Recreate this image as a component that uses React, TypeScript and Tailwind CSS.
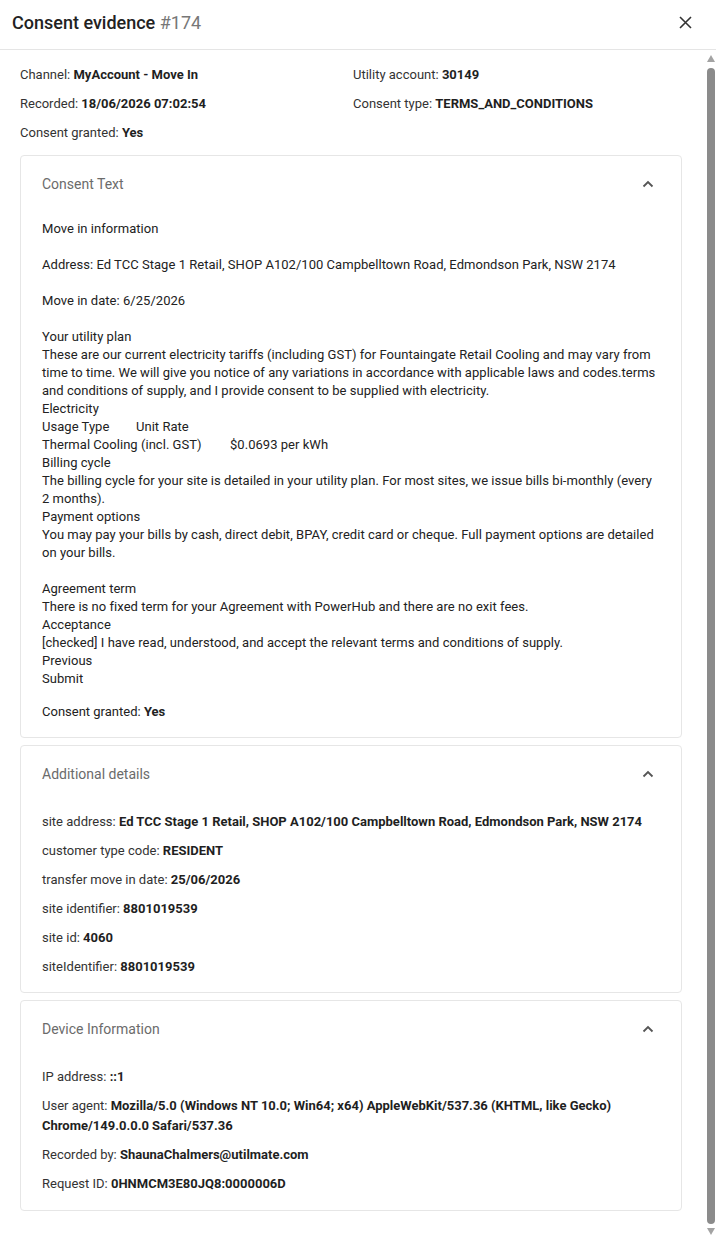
import type { ReactNode } from "react"

const consentText = `Move in information

Address: Ed TCC Stage 1 Retail, SHOP A102/100 Campbelltown Road, Edmondson Park, NSW 2174

Move in date: 6/25/2026

Your utility plan
These are our current electricity tariffs (including GST) for Fountaingate Retail Cooling and may vary from time to time. We will give you notice of any variations in accordance with applicable laws and codes.terms and conditions of supply, and I provide consent to be supplied with electricity.
Electricity
Usage Type\tUnit Rate
Thermal Cooling (incl. GST)\t$0.0693 per kWh
Billing cycle
The billing cycle for your site is detailed in your utility plan. For most sites, we issue bills bi-monthly (every 2 months).
Payment options
You may pay your bills by cash, direct debit, BPAY, credit card or cheque. Full payment options are detailed on your bills.

Agreement term
There is no fixed term for your Agreement with PowerHub and there are no exit fees.
Acceptance
[checked] I have read, understood, and accept the relevant terms and conditions of supply.
Previous
Submit`

const additionalDetails = [
  { label: "site address", value: "Ed TCC Stage 1 Retail, SHOP A102/100 Campbelltown Road, Edmondson Park, NSW 2174" },
  { label: "customer type code", value: "RESIDENT" },
  { label: "transfer move in date", value: "25/06/2026" },
  { label: "site identifier", value: "8801019539" },
  { label: "site id", value: "4060" },
  { label: "siteIdentifier", value: "8801019539" },
]

const deviceInfo = [
  { label: "IP address", value: "::1" },
  {
    label: "User agent",
    value: "Mozilla/5.0 (Windows NT 10.0; Win64; x64) AppleWebKit/537.36 (KHTML, like Gecko) Chrome/149.0.0.0 Safari/537.36",
  },
  { label: "Recorded by", value: "ShaunaChalmers@utilmate.com" },
  { label: "Request ID", value: "0HNMCM3E80JQ8:0000006D" },
]

function Field({ label, value }: { label: string; value: string }) {
  return (
    <p className="text-[13px] leading-[20px] text-[#333]">
      {label}: <strong className="font-bold text-[#1f1f1f]">{value}</strong>
    </p>
  )
}

function ChevronUp() {
  return (
    <svg width="12" height="8" viewBox="0 0 12 8" fill="none" stroke="#555" strokeWidth="1.8">
      <path d="M1.5 6.5 6 2l4.5 4.5" />
    </svg>
  )
}

function Section({ title, children }: { title: string; children: ReactNode }) {
  return (
    <div className="rounded-[4px] border border-[#e6e6e6] bg-white">
      <div className="flex h-[56px] items-center justify-between pl-[21px] pr-[27px]">
        <span className="text-[14px] text-[#6b6b6b]">{title}</span>
        <ChevronUp />
      </div>
      {children}
    </div>
  )
}

// Scroll track shown beside the body
function ScrollTrack() {
  return (
    <div className="flex w-[10px] shrink-0 flex-col items-center pb-[4px] pt-[5px]">
      <svg width="8" height="7" viewBox="0 0 8 7" fill="#a3a3a3">
        <path d="M4 0 8 7H0z" />
      </svg>
      <div className="mt-[6px] w-[8px] flex-1 rounded-full bg-[#8b8b8b]" />
      <svg className="mt-[4px]" width="8" height="7" viewBox="0 0 8 7" fill="#a3a3a3">
        <path d="M0 0h8L4 7z" />
      </svg>
    </div>
  )
}

export default function App() {
  return (
    <div className="flex h-[1239px] w-full flex-col bg-white font-['Roboto','Helvetica','Arial',sans-serif] text-[#222]">
      {/* Dialog title */}
      <div className="flex h-[50px] shrink-0 items-center justify-between border-b border-[#e5e5e5] pb-[4px] pl-3 pr-[24px]">
        <h2 className="text-[18px] font-medium text-[#222]">
          Consent evidence <span className="font-normal text-[#777]">#174</span>
        </h2>
        <svg width="13" height="13" viewBox="0 0 13 13" stroke="#333" strokeWidth="1.6">
          <path d="M1 1l11 11M12 1 1 12" />
        </svg>
      </div>

      {/* Body */}
      <div className="flex min-h-0 flex-1">
        <div className="min-w-0 flex-1 overflow-y-auto [scrollbar-width:none]">
          <div className="pb-[40px] pl-5 pr-6 pt-[15px]">
            <div className="grid grid-cols-2 gap-x-1 gap-y-[9px]">
              <Field label="Channel" value="MyAccount - Move In" />
              <Field label="Utility account" value="30149" />
              <Field label="Recorded" value="18/06/2026 07:02:54" />
              <Field label="Consent type" value="TERMS_AND_CONDITIONS" />
              <Field label="Consent granted" value="Yes" />
            </div>

            <div className="mt-[12px] flex flex-col gap-[7px]">
              <Section title="Consent Text">
                <div className="px-[21px] pb-[15px] pt-[8px]">
                  <p className="whitespace-pre-wrap text-[13px] leading-[18px] tracking-[0.035px] text-[#222] [tab-size:94px]">
                    {consentText}
                  </p>
                  <p className="mt-[14px] text-[13px] leading-[20px] text-[#222]">
                    Consent granted: <strong className="font-bold">Yes</strong>
                  </p>
                </div>
              </Section>

              <Section title="Additional details">
                <div className="flex flex-col gap-[9px] px-[21px] pb-[15px] pt-[10px]">
                  {additionalDetails.map((d) => (
                    <Field key={d.label} label={d.label} value={d.value} />
                  ))}
                </div>
              </Section>

              <Section title="Device Information">
                <div className="flex flex-col gap-[9px] px-[21px] pb-[16px] pt-[10px]">
                  {deviceInfo.map((d) => (
                    <Field key={d.label} label={d.label} value={d.value} />
                  ))}
                </div>
              </Section>
            </div>
          </div>
        </div>
        <ScrollTrack />
      </div>
    </div>
  )
}
